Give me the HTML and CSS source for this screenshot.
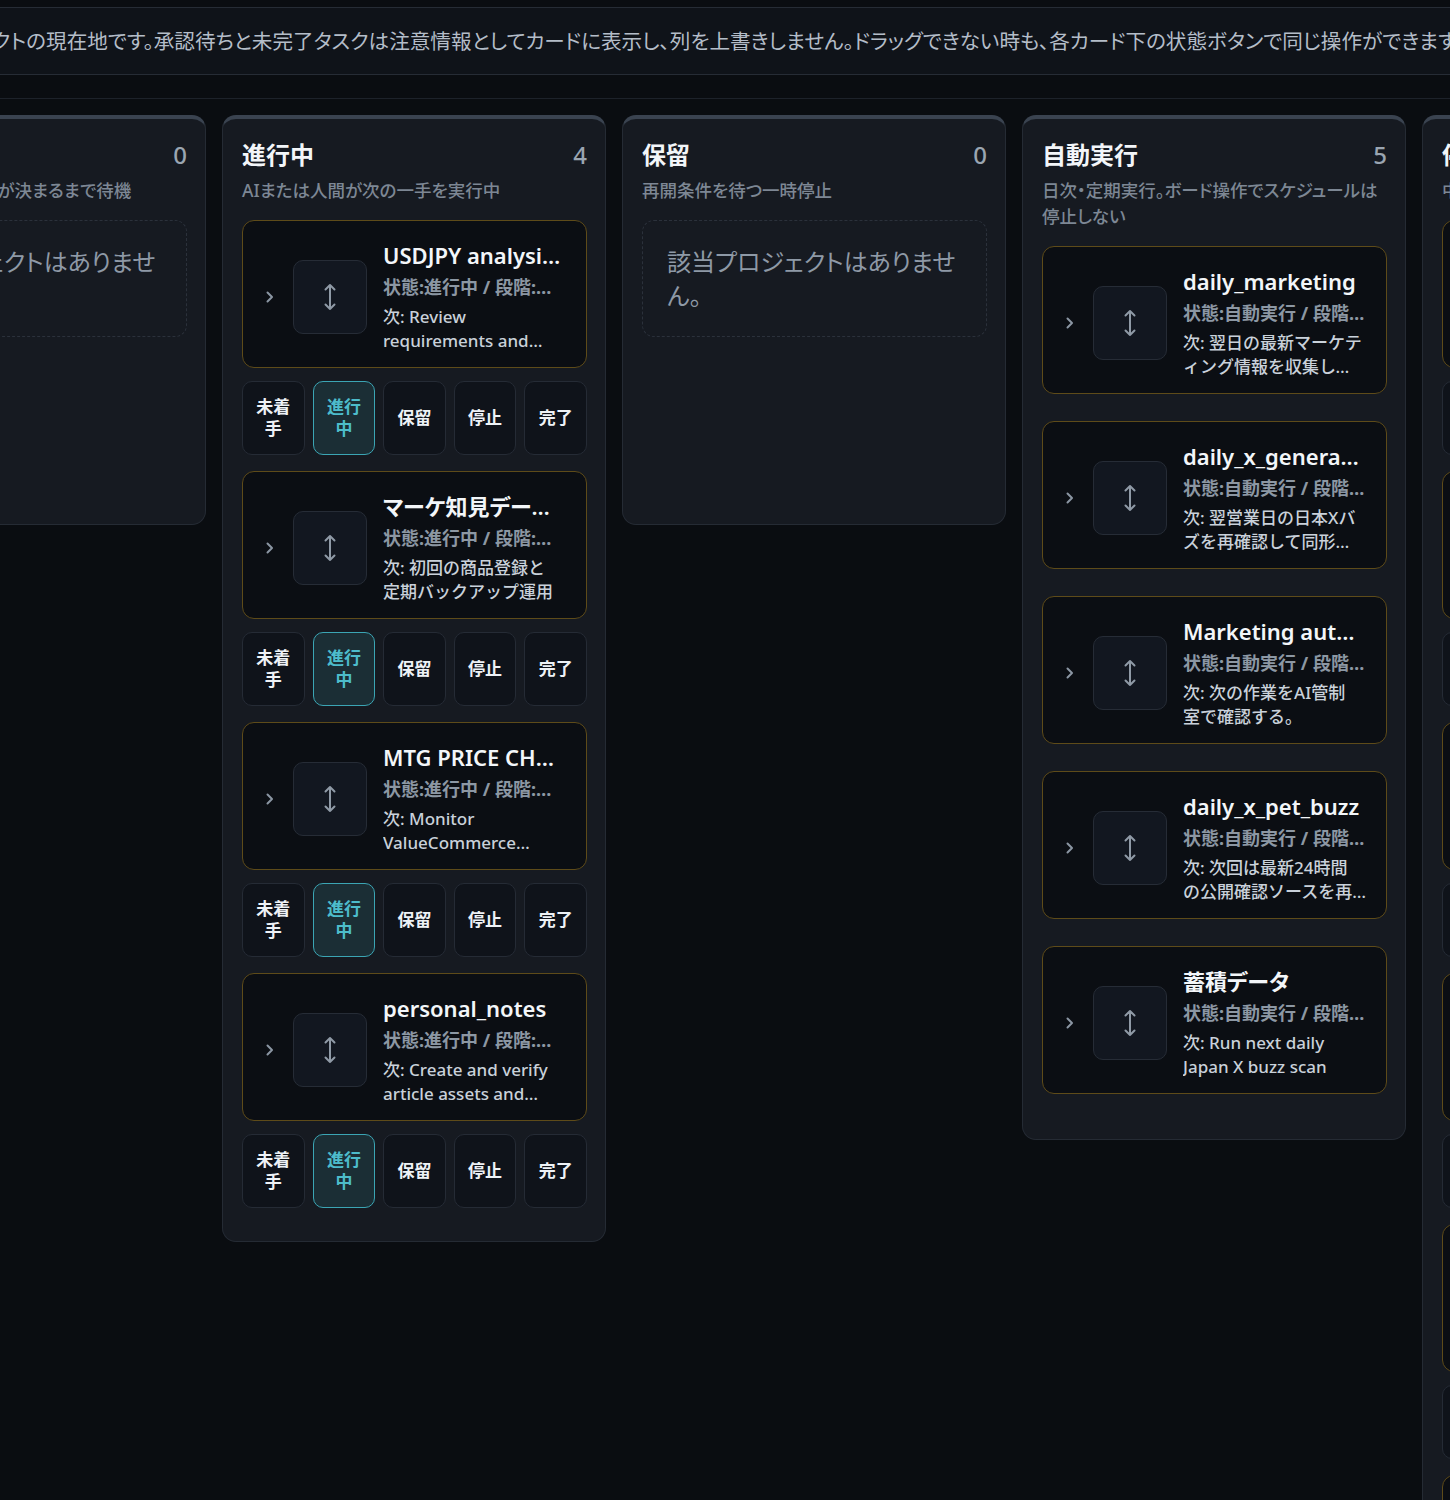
FILE: index.html
```html
<!DOCTYPE html>
<html lang="ja">
<head>
<meta charset="utf-8">
<title>プロジェクトボード</title>
<link rel="stylesheet" href="styles.css">
</head>
<body>
<div class="page">
  <div class="notice">
    <p>画面はプロジェクトの現在地です。承認待ちと未完了タスクは注意情報としてカードに表示し、列を上書きしません。ドラッグできない時も、各カード下の状態ボタンで同じ操作ができます。</p>
  </div>

  <div class="board">
    <!-- 未着手 -->
    <section class="col">
      <header class="col-head"><h2>未着手</h2><span class="count">0</span></header>
      <p class="col-desc">優先順位と着手条件が決まるまで待機</p>
      <div class="list">
        <div class="empty">該当プロジェクトはありません。</div>
      </div>
    </section>

    <!-- 進行中 -->
    <section class="col">
      <header class="col-head"><h2>進行中</h2><span class="count">4</span></header>
      <p class="col-desc">AIまたは人間が次の一手を実行中</p>
      <div class="list">
        <article class="item">
          <div class="card">
            <span class="chev"><svg width="8" height="12" viewBox="0 0 8 12"><path d="M1.5 1.5 L6 6 L1.5 10.5" fill="none" stroke="#8b96a3" stroke-width="2" stroke-linecap="round" stroke-linejoin="round"/></svg></span>
            <span class="handle"><svg width="14" height="28" viewBox="0 0 14 28"><path d="M7 2 V26 M2.5 6.5 L7 2 L11.5 6.5 M2.5 21.5 L7 26 L11.5 21.5" fill="none" stroke="#8f9aa6" stroke-width="2" stroke-linecap="round" stroke-linejoin="round"/></svg></span>
            <div class="info">
              <h3 class="title">USDJPY analysis system</h3>
              <p class="status">状態:進行中 / 段階:要件確認</p>
              <p class="next">次: Review requirements and prepare the first analysis draft</p>
            </div>
          </div>
          <div class="actions">
            <button class="btn">未着手</button><button class="btn on">進行中</button><button class="btn">保留</button><button class="btn">停止</button><button class="btn">完了</button>
          </div>
        </article>

        <article class="item">
          <div class="card">
            <span class="chev"><svg width="8" height="12" viewBox="0 0 8 12"><path d="M1.5 1.5 L6 6 L1.5 10.5" fill="none" stroke="#8b96a3" stroke-width="2" stroke-linecap="round" stroke-linejoin="round"/></svg></span>
            <span class="handle"><svg width="14" height="28" viewBox="0 0 14 28"><path d="M7 2 V26 M2.5 6.5 L7 2 L11.5 6.5 M2.5 21.5 L7 26 L11.5 21.5" fill="none" stroke="#8f9aa6" stroke-width="2" stroke-linecap="round" stroke-linejoin="round"/></svg></span>
            <div class="info">
              <h3 class="title">マーケ知見データベース</h3>
              <p class="status">状態:進行中 / 段階:運用準備</p>
              <p class="next">次: 初回の商品登録と<br>定期バックアップ運用</p>
            </div>
          </div>
          <div class="actions">
            <button class="btn">未着手</button><button class="btn on">進行中</button><button class="btn">保留</button><button class="btn">停止</button><button class="btn">完了</button>
          </div>
        </article>

        <article class="item">
          <div class="card">
            <span class="chev"><svg width="8" height="12" viewBox="0 0 8 12"><path d="M1.5 1.5 L6 6 L1.5 10.5" fill="none" stroke="#8b96a3" stroke-width="2" stroke-linecap="round" stroke-linejoin="round"/></svg></span>
            <span class="handle"><svg width="14" height="28" viewBox="0 0 14 28"><path d="M7 2 V26 M2.5 6.5 L7 2 L11.5 6.5 M2.5 21.5 L7 26 L11.5 21.5" fill="none" stroke="#8f9aa6" stroke-width="2" stroke-linecap="round" stroke-linejoin="round"/></svg></span>
            <div class="info">
              <h3 class="title">MTG PRICE CHECKER</h3>
              <p class="status">状態:進行中 / 段階:監視中</p>
              <p class="next">次: Monitor ValueCommerce approval and price feeds</p>
            </div>
          </div>
          <div class="actions">
            <button class="btn">未着手</button><button class="btn on">進行中</button><button class="btn">保留</button><button class="btn">停止</button><button class="btn">完了</button>
          </div>
        </article>

        <article class="item">
          <div class="card">
            <span class="chev"><svg width="8" height="12" viewBox="0 0 8 12"><path d="M1.5 1.5 L6 6 L1.5 10.5" fill="none" stroke="#8b96a3" stroke-width="2" stroke-linecap="round" stroke-linejoin="round"/></svg></span>
            <span class="handle"><svg width="14" height="28" viewBox="0 0 14 28"><path d="M7 2 V26 M2.5 6.5 L7 2 L11.5 6.5 M2.5 21.5 L7 26 L11.5 21.5" fill="none" stroke="#8f9aa6" stroke-width="2" stroke-linecap="round" stroke-linejoin="round"/></svg></span>
            <div class="info">
              <h3 class="title">personal_notes</h3>
              <p class="status">状態:進行中 / 段階:執筆中</p>
              <p class="next">次: Create and verify article assets and publish notes</p>
            </div>
          </div>
          <div class="actions">
            <button class="btn">未着手</button><button class="btn on">進行中</button><button class="btn">保留</button><button class="btn">停止</button><button class="btn">完了</button>
          </div>
        </article>
      </div>
    </section>

    <!-- 保留 -->
    <section class="col">
      <header class="col-head"><h2>保留</h2><span class="count">0</span></header>
      <p class="col-desc">再開条件を待つ一時停止</p>
      <div class="list">
        <div class="empty">該当プロジェクトはありません。</div>
      </div>
    </section>

    <!-- 自動実行 -->
    <section class="col">
      <header class="col-head"><h2>自動実行</h2><span class="count">5</span></header>
      <p class="col-desc">日次・定期実行。ボード操作でスケジュールは停止しない</p>
      <div class="list list-auto">
        <article class="card">
          <span class="chev"><svg width="8" height="12" viewBox="0 0 8 12"><path d="M1.5 1.5 L6 6 L1.5 10.5" fill="none" stroke="#8b96a3" stroke-width="2" stroke-linecap="round" stroke-linejoin="round"/></svg></span>
          <span class="handle"><svg width="14" height="28" viewBox="0 0 14 28"><path d="M7 2 V26 M2.5 6.5 L7 2 L11.5 6.5 M2.5 21.5 L7 26 L11.5 21.5" fill="none" stroke="#8f9aa6" stroke-width="2" stroke-linecap="round" stroke-linejoin="round"/></svg></span>
          <div class="info">
            <h3 class="title">daily_marketing</h3>
            <p class="status">状態:自動実行 / 段階:日次</p>
            <p class="next">次: 翌日の最新マーケティング情報を収集してレポート化する</p>
          </div>
        </article>
        <article class="card">
          <span class="chev"><svg width="8" height="12" viewBox="0 0 8 12"><path d="M1.5 1.5 L6 6 L1.5 10.5" fill="none" stroke="#8b96a3" stroke-width="2" stroke-linecap="round" stroke-linejoin="round"/></svg></span>
          <span class="handle"><svg width="14" height="28" viewBox="0 0 14 28"><path d="M7 2 V26 M2.5 6.5 L7 2 L11.5 6.5 M2.5 21.5 L7 26 L11.5 21.5" fill="none" stroke="#8f9aa6" stroke-width="2" stroke-linecap="round" stroke-linejoin="round"/></svg></span>
          <div class="info">
            <h3 class="title">daily_x_generator</h3>
            <p class="status">状態:自動実行 / 段階:日次</p>
            <p class="next">次: 翌営業日の日本Xバズを再確認して同形式で投稿案を作る</p>
          </div>
        </article>
        <article class="card">
          <span class="chev"><svg width="8" height="12" viewBox="0 0 8 12"><path d="M1.5 1.5 L6 6 L1.5 10.5" fill="none" stroke="#8b96a3" stroke-width="2" stroke-linecap="round" stroke-linejoin="round"/></svg></span>
          <span class="handle"><svg width="14" height="28" viewBox="0 0 14 28"><path d="M7 2 V26 M2.5 6.5 L7 2 L11.5 6.5 M2.5 21.5 L7 26 L11.5 21.5" fill="none" stroke="#8f9aa6" stroke-width="2" stroke-linecap="round" stroke-linejoin="round"/></svg></span>
          <div class="info">
            <h3 class="title">Marketing automation</h3>
            <p class="status">状態:自動実行 / 段階:定期</p>
            <p class="next">次: 次の作業をAI管制<br>室で確認する。</p>
          </div>
        </article>
        <article class="card">
          <span class="chev"><svg width="8" height="12" viewBox="0 0 8 12"><path d="M1.5 1.5 L6 6 L1.5 10.5" fill="none" stroke="#8b96a3" stroke-width="2" stroke-linecap="round" stroke-linejoin="round"/></svg></span>
          <span class="handle"><svg width="14" height="28" viewBox="0 0 14 28"><path d="M7 2 V26 M2.5 6.5 L7 2 L11.5 6.5 M2.5 21.5 L7 26 L11.5 21.5" fill="none" stroke="#8f9aa6" stroke-width="2" stroke-linecap="round" stroke-linejoin="round"/></svg></span>
          <div class="info">
            <h3 class="title">daily_x_pet_buzz</h3>
            <p class="status">状態:自動実行 / 段階:日次</p>
            <p class="next">次: 次回は最新24時間<br>の公開確認ソースを再チェックする</p>
          </div>
        </article>
        <article class="card">
          <span class="chev"><svg width="8" height="12" viewBox="0 0 8 12"><path d="M1.5 1.5 L6 6 L1.5 10.5" fill="none" stroke="#8b96a3" stroke-width="2" stroke-linecap="round" stroke-linejoin="round"/></svg></span>
          <span class="handle"><svg width="14" height="28" viewBox="0 0 14 28"><path d="M7 2 V26 M2.5 6.5 L7 2 L11.5 6.5 M2.5 21.5 L7 26 L11.5 21.5" fill="none" stroke="#8f9aa6" stroke-width="2" stroke-linecap="round" stroke-linejoin="round"/></svg></span>
          <div class="info">
            <h3 class="title">蓄積データ</h3>
            <p class="status">状態:自動実行 / 段階:日次</p>
            <p class="next">次: Run next daily Japan X buzz scan</p>
          </div>
        </article>
      </div>
    </section>

    <!-- 停止 -->
    <section class="col">
      <header class="col-head"><h2>停止</h2><span class="count">7</span></header>
      <p class="col-desc">中断中。再開判断を待つ</p>
      <div class="list">
        <article class="item">
          <div class="card"><span class="chev"></span><span class="handle"></span><div class="info"><h3 class="title">archive_tool</h3><p class="status">状態:停止 / 段階:中断</p><p class="next">次: 再開条件を確認する</p></div></div>
          <div class="actions"><button class="btn">未着手</button><button class="btn">進行中</button><button class="btn">保留</button><button class="btn">停止</button><button class="btn">完了</button></div>
        </article>
        <article class="item">
          <div class="card"><span class="chev"></span><span class="handle"></span><div class="info"><h3 class="title">old_scraper</h3><p class="status">状態:停止 / 段階:中断</p><p class="next">次: 再開条件を確認する</p></div></div>
          <div class="actions"><button class="btn">未着手</button><button class="btn">進行中</button><button class="btn">保留</button><button class="btn">停止</button><button class="btn">完了</button></div>
        </article>
        <article class="item">
          <div class="card"><span class="chev"></span><span class="handle"></span><div class="info"><h3 class="title">report_bot</h3><p class="status">状態:停止 / 段階:中断</p><p class="next">次: 再開条件を確認する</p></div></div>
          <div class="actions"><button class="btn">未着手</button><button class="btn">進行中</button><button class="btn">保留</button><button class="btn">停止</button><button class="btn">完了</button></div>
        </article>
        <article class="item">
          <div class="card"><span class="chev"></span><span class="handle"></span><div class="info"><h3 class="title">shop_sync</h3><p class="status">状態:停止 / 段階:中断</p><p class="next">次: 再開条件を確認する</p></div></div>
          <div class="actions"><button class="btn">未着手</button><button class="btn">進行中</button><button class="btn">保留</button><button class="btn">停止</button><button class="btn">完了</button></div>
        </article>
        <article class="item">
          <div class="card"><span class="chev"></span><span class="handle"></span><div class="info"><h3 class="title">blog_draft</h3><p class="status">状態:停止 / 段階:中断</p><p class="next">次: 再開条件を確認する</p></div></div>
          <div class="actions"><button class="btn">未着手</button><button class="btn">進行中</button><button class="btn">保留</button><button class="btn">停止</button><button class="btn">完了</button></div>
        </article>
        <article class="item">
          <div class="card"><span class="chev"></span><span class="handle"></span><div class="info"><h3 class="title">price_alert</h3><p class="status">状態:停止 / 段階:中断</p><p class="next">次: 再開条件を確認する</p></div></div>
          <div class="actions"><button class="btn">未着手</button><button class="btn">進行中</button><button class="btn">保留</button><button class="btn">停止</button><button class="btn">完了</button></div>
        </article>
      </div>
    </section>
  </div>
</div>
</body>
</html>
```

FILE: styles.css
```css
* { box-sizing: border-box; }

html, body {
  margin: 0;
  background: #0a0d11;
}

body {
  font-family: "Noto Sans", "Noto Sans CJK JP", sans-serif;
  color: #e6edf3;
  overflow: hidden;
}

.page {
  width: 2200px;
  margin-left: -178px;
  padding-top: 7px;
}

/* top notice */
.notice {
  background: #0f1319;
  border-top: 1px solid #262c35;
  border-bottom: 1px solid #262c35;
  padding: 18px 24px 18px 32px;
}

.notice p {
  margin: 0;
  font-size: 20.6px;
  line-height: 30px;
  color: #b4bdc8;
  white-space: nowrap;
  font-feature-settings: "palt";
}

/* board */
.board {
  margin-top: 23px;
  border-top: 1px solid #1d222a;
  padding: 16px 0 40px;
  display: flex;
  gap: 16px;
  align-items: flex-start;
}

.col {
  flex: none;
  width: 384px;
  min-height: 410px;
  background: #161a21;
  border: 1px solid #252b34;
  border-top: 4px solid #3a4350;
  border-radius: 14px;
  padding: 18px 18px 33px 19px;
}

.col-head {
  display: flex;
  justify-content: space-between;
  align-items: center;
}

.col-head h2 {
  margin: 0;
  font-size: 24px;
  line-height: 36px;
  font-weight: 700;
  color: #f3f6f9;
}

.count {
  font-size: 24px;
  line-height: 36px;
  font-weight: 500;
  color: #9aa5b1;
}

.col-desc {
  margin: 4px 0 0;
  font-size: 17.5px;
  line-height: 26px;
  font-weight: 500;
  color: #7d8794;
  font-feature-settings: "palt";
}

.list {
  margin-top: 17px;
  display: flex;
  flex-direction: column;
  gap: 16px;
}

.list-auto {
  gap: 27px;
  padding-bottom: 12px;
}

.empty {
  border: 1px dashed #2b313b;
  border-radius: 12px;
  padding: 24px 24px 23px;
  font-size: 24px;
  line-height: 34px;
  color: #8e99a6;
  font-feature-settings: "palt";
}

/* cards */
.item {
  display: flex;
  flex-direction: column;
  gap: 13px;
}

.card {
  display: flex;
  align-items: center;
  min-height: 148px;
  background: #0b0e13;
  border: 1px solid #5e4b19;
  border-radius: 12px;
  padding: 19px 20px 14px 22px;
}

.chev {
  flex: none;
  width: 28px;
  display: flex;
  align-items: center;
  padding-left: 1px;
}

.handle {
  flex: none;
  width: 74px;
  height: 74px;
  margin-right: 16px;
  border: 1px solid #262c36;
  border-radius: 10px;
  background: #121720;
  display: flex;
  align-items: center;
  justify-content: center;
}

.info {
  flex: 1;
  min-width: 0;
}

.title {
  margin: 0;
  font-size: 22px;
  line-height: 30px;
  font-weight: 600;
  color: #f3f6f9;
  white-space: nowrap;
  overflow: hidden;
  text-overflow: ellipsis;
  font-feature-settings: "palt";
}

.status {
  margin: 4px 0 0;
  font-size: 18px;
  line-height: 26px;
  font-weight: 700;
  color: #8c97a3;
  white-space: nowrap;
  overflow: hidden;
  text-overflow: ellipsis;
}

.next {
  margin: 5px 0 0;
  font-size: 17px;
  line-height: 24px;
  font-weight: 500;
  color: #c9d1da;
  display: -webkit-box;
  -webkit-line-clamp: 2;
  -webkit-box-orient: vertical;
  overflow: hidden;
}

/* status buttons */
.actions {
  display: grid;
  grid-template-columns: repeat(5, 1fr);
  gap: 8px;
}

.btn {
  height: 74px;
  padding: 0 12px;
  border: 1px solid #252b35;
  border-radius: 10px;
  background: #0f131a;
  color: #eef2f6;
  font-family: "Noto Sans", "Noto Sans CJK JP", sans-serif;
  font-size: 17px;
  line-height: 22px;
  font-weight: 700;
}

.btn.on {
  background: #1b2e35;
  border-color: #3ba5b4;
  color: #4dbccb;
}
```
